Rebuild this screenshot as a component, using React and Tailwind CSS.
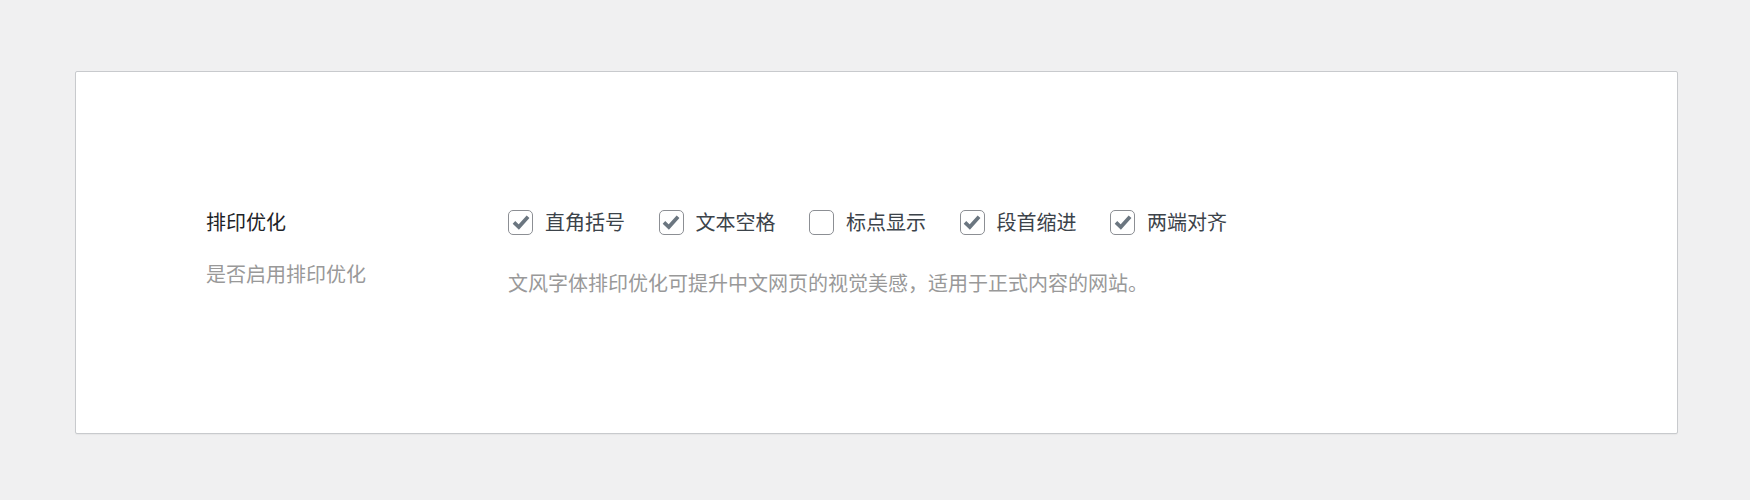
import React, { useState } from 'react';

const FONT = '"Noto Sans CJK SC", "Noto Sans", sans-serif';

const OPTIONS = [
  { key: 'quotes', label: '直角括号', on: true },
  { key: 'spacing', label: '文本空格', on: true },
  { key: 'punct', label: '标点显示', on: false },
  { key: 'indent', label: '段首缩进', on: true },
  { key: 'justify', label: '两端对齐', on: true },
];

const CheckBox = ({ checked, onChange }) => (
  <button
    type="button"
    onClick={onChange}
    className="w-[25px] h-[25px] shrink-0 rounded-[5px] border-[1.5px] border-[#8c8f94] bg-white flex items-center justify-center"
  >
    {checked && (
      <svg width="22" height="22" viewBox="0 0 20 20">
        <polyline points="3.6,10.4 8,14.6 16.4,5.2" fill="none" stroke="#6b7680" strokeWidth="3.4" strokeLinejoin="miter" />
      </svg>
    )}
  </button>
);

const App = () => {
  const [opts, setOpts] = useState(OPTIONS);

  const toggle = key => setOpts(prev => prev.map(o => (o.key === key ? { ...o, on: !o.on } : o)));

  return (
    <div className="min-h-[500px] bg-[#f0f0f1] pt-[71px]" style={{ fontFamily: FONT }}>
      <div className="ml-[75px] mr-[72px] h-[363px] bg-white border border-[#c8cacd] rounded-[2px] shadow-[0_1px_1px_rgba(0,0,0,0.04)] pl-[130px] pt-[136px] flex">
        {/* label column */}
        <div className="w-[302px] shrink-0">
          <div className="text-[20px] leading-[28px] text-[#1d2327]">排印优化</div>
          <div className="mt-[24px] text-[20px] leading-[28px] text-[#999]">是否启用排印优化</div>
        </div>

        {/* options */}
        <div>
          <div className="h-[28px] flex items-center gap-x-[33.5px]">
            {opts.map(o => (
              <label key={o.key} className="flex items-center gap-[12px] cursor-pointer">
                <CheckBox checked={o.on} onChange={() => toggle(o.key)} />
                <span className="text-[20px] leading-[28px] text-[#3c434a]">{o.label}</span>
              </label>
            ))}
          </div>
          <p className="mt-[33px] text-[20px] leading-[28px] text-[#999]">
            文风字体排印优化可提升中文网页的视觉美感，适用于正式内容的网站。
          </p>
        </div>
      </div>
    </div>
  );
};

export default App;
